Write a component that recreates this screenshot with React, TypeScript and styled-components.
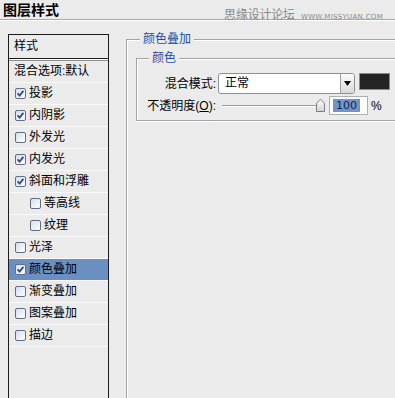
import React from "react";
import styled, { createGlobalStyle } from "styled-components";

const Global = createGlobalStyle`
  html, body { margin: 0; padding: 0; height: 100%; overflow: hidden; background: #ebebeb; }
  #root { height: 100%; }
`;

const FONT = `"Liberation Sans", "Noto Sans CJK SC", sans-serif`;

const Page = styled.div`
  height: 100%;
  display: flex;
  flex-direction: column;
  font-family: ${FONT};
  font-size: 12px;
  color: #000;
  background: #ebebeb;
`;

const Header = styled.div`
  height: 19px;
  flex: none;
  display: flex;
  justify-content: space-between;
  align-items: flex-start;
  border-bottom: 1px solid #a9a9a9;
  box-shadow: 0 1px 0 #fff;
`;

const Title = styled.div`
  padding-left: 3px;
  font-size: 14px;
  font-weight: bold;
  line-height: 19px;
  font-family: "Noto Sans CJK SC", sans-serif;
`;

const Watermark = styled.div`
  margin-top: 7px;
  margin-right: 12px;
  line-height: 14px;
  color: #8a8a8a;
  display: flex;
  align-items: baseline;
  gap: 6px;
  white-space: nowrap;
`;

const WmCn = styled.span`
  font-size: 12px;
  font-family: "Noto Sans CJK SC", sans-serif;
  letter-spacing: -0.2px;
`;

const WmEn = styled.span`
  font-size: 7px;
  font-family: "DejaVu Sans", sans-serif;
  letter-spacing: 0.3px;
`;

const Main = styled.div`
  flex: 1;
  display: flex;
  min-height: 0;
`;

const LeftPanel = styled.div`
  margin: 14px 0 0 8px;
  width: 101px;
  box-sizing: border-box;
  border: 1px solid #1c1c1c;
  border-bottom: none;
  display: flex;
  flex-direction: column;
  flex: none;
`;

const PanelHeader = styled.div`
  height: 23px;
  line-height: 23px;
  padding-left: 5px;
  border-bottom: 1px solid #1c1c1c;
`;

const ListTop = styled.div`
  height: 0;
  border-top: 1px solid #fff;
  border-bottom: 1px solid #8f8f8f;
`;

const Row = styled.div<{ $indent: number; $selected?: boolean }>`
  height: 21px;
  border-bottom: 1px solid #fafafa;
  display: flex;
  align-items: center;
  gap: 3px;
  padding-left: ${(p) => p.$indent}px;
  background: ${(p) => (p.$selected ? "#6a8fc0" : "transparent")};
  white-space: nowrap;
  line-height: 21px;
`;

const RightCol = styled.div`
  flex: 1;
  min-width: 0;
  display: flex;
  flex-direction: column;
  padding-left: 17px;
`;

const OuterSet = styled.fieldset`
  flex: 1;
  min-width: 0;
  margin: 12px 0 0 0;
  padding: 5px 0 0 0;
  border: 1px solid #a3a3a3;
  border-right: 0;
  border-bottom: 0;
  box-shadow: inset 1px 1px 0 #fff;
`;

const Legend = styled.legend<{ $offset: number }>`
  margin-left: ${(p) => p.$offset}px;
  padding: 0 3px;
  line-height: 14px;
  font-size: 12px;
  color: #1f4e9e;
  background: #ebebeb;
`;

const InnerSet = styled.fieldset`
  min-width: 0;
  margin: 0 0 0 9px;
  padding: 8px 0 5px 0;
  border: 1px solid #a3a3a3;
  border-right: 0;
  box-shadow: inset 1px 1px 0 #fff, 0 1px 0 #fff;
`;

const FormGrid = styled.div`
  display: grid;
  grid-template-columns: 79px 1fr;
  column-gap: 2px;
  row-gap: 2px;
  align-items: center;
`;

const Label = styled.div`
  text-align: right;
  white-space: nowrap;
  line-height: 14px;
`;

const Key = styled.span`
  text-decoration: underline;
`;

const Cell = styled.div<{ $align: string }>`
  display: flex;
  align-items: ${(p) => p.$align};
`;

const Select = styled.div`
  width: 137px;
  height: 21px;
  box-sizing: border-box;
  border: 1px solid #8c9096;
  border-radius: 3px;
  background: #fff;
  display: flex;
  align-items: center;
  overflow: hidden;
`;

const SelectText = styled.div`
  flex: 1;
  padding-left: 6px;
  line-height: 19px;
`;

const SelectButton = styled.div`
  width: 14px;
  height: 100%;
  box-sizing: border-box;
  border-left: 1px solid #a0a0a0;
  background: linear-gradient(#fbfbfb, #d9d9d9);
  display: flex;
  align-items: center;
  justify-content: center;
`;

const Swatch = styled.div`
  width: 31px;
  height: 17px;
  box-sizing: border-box;
  margin-left: 4px;
  background: #232323;
  border: 1px solid #8a8a8a;
`;

const SliderArea = styled.div`
  width: 111px;
  padding-left: 4px;
  box-sizing: border-box;
  display: flex;
  align-items: center;
`;

const Track = styled.div`
  position: relative;
  width: 98px;
  height: 0;
  border-top: 1px solid #9a9a9a;
  border-bottom: 1px solid #fff;
`;

const Thumb = styled.svg`
  position: absolute;
  right: -5px;
  top: -7px;
`;

const NumInput = styled.div`
  width: 39px;
  height: 19px;
  box-sizing: border-box;
  border: 1px solid #a9b0b8;
  background: #fff;
  padding-left: 3px;
  display: flex;
  align-items: center;
`;

const Highlight = styled.span`
  background: #7393c6;
  color: #0f2559;
  padding: 0 3px;
  line-height: 13px;
  font-family: "DejaVu Sans", sans-serif;
  font-size: 11px;
`;

const Percent = styled.span`
  margin-left: 3px;
`;

const CheckBox = ({ checked }: { checked: boolean }) => (
  <svg width="11" height="11" viewBox="0 0 11 11" style={{ flex: "none" }}>
    <defs>
      <linearGradient id="cbg" x1="0" y1="0" x2="1" y2="1">
        <stop offset="0" stopColor="#d6dde8" />
        <stop offset="1" stopColor="#ffffff" />
      </linearGradient>
    </defs>
    <rect x="0.5" y="0.5" width="10" height="10" rx="1.5" fill="url(#cbg)" stroke="#5f6e85" />
    {checked && (
      <path d="M2.6 5.4 L4.6 7.6 L8.4 2.9" fill="none" stroke="#2a4b9b" strokeWidth="1.8" />
    )}
  </svg>
);

const items: { label: string; checked: boolean; indent?: boolean; selected?: boolean }[] = [
  { label: "投影", checked: true },
  { label: "内阴影", checked: true },
  { label: "外发光", checked: false },
  { label: "内发光", checked: true },
  { label: "斜面和浮雕", checked: true },
  { label: "等高线", checked: false, indent: true },
  { label: "纹理", checked: false, indent: true },
  { label: "光泽", checked: false },
  { label: "颜色叠加", checked: true, selected: true },
  { label: "渐变叠加", checked: false },
  { label: "图案叠加", checked: false },
  { label: "描边", checked: false },
];

export default function App() {
  return (
    <Page>
      <Global />
      <Header>
        <Title>图层样式</Title>
        <Watermark>
          <WmCn>思缘设计论坛</WmCn>
          <WmEn>WWW.MISSYUAN.COM</WmEn>
        </Watermark>
      </Header>
      <Main>
        <LeftPanel>
          <PanelHeader>样式</PanelHeader>
          <ListTop />
          <Row $indent={5}>混合选项:默认</Row>
          {items.map((it) => (
            <Row key={it.label} $indent={it.indent ? 21 : 6} $selected={it.selected}>
              <CheckBox checked={it.checked} />
              {it.label}
            </Row>
          ))}
        </LeftPanel>
        <RightCol>
          <OuterSet>
            <Legend $offset={13}>颜色叠加</Legend>
            <InnerSet>
              <Legend $offset={12}>颜色</Legend>
              <FormGrid>
                <Label>混合模式:</Label>
                <Cell $align="flex-start">
                  <Select>
                    <SelectText>正常</SelectText>
                    <SelectButton>
                      <svg width="7" height="5" viewBox="0 0 7 5">
                        <polygon points="0,0 7,0 3.5,5" fill="#000" />
                      </svg>
                    </SelectButton>
                  </Select>
                  <Swatch />
                </Cell>
                <Label>
                  不透明度(<Key>O</Key>):
                </Label>
                <Cell $align="center">
                  <SliderArea>
                    <Track>
                      <Thumb width="9" height="13" viewBox="0 0 9 13">
                        <defs>
                          <linearGradient id="thg" x1="0" y1="0" x2="0" y2="1">
                            <stop offset="0" stopColor="#fafafa" />
                            <stop offset="1" stopColor="#d4d4d4" />
                          </linearGradient>
                        </defs>
                        <path
                          d="M0.5 12.5 V4.8 Q0.5 4 1.2 3.3 L3.8 0.9 Q4.5 0.3 5.2 0.9 L7.8 3.3 Q8.5 4 8.5 4.8 V12.5 Z"
                          fill="url(#thg)"
                          stroke="#7d7d7d"
                        />
                      </Thumb>
                    </Track>
                  </SliderArea>
                  <NumInput>
                    <Highlight>100</Highlight>
                  </NumInput>
                  <Percent>%</Percent>
                </Cell>
              </FormGrid>
            </InnerSet>
          </OuterSet>
        </RightCol>
      </Main>
    </Page>
  );
}
